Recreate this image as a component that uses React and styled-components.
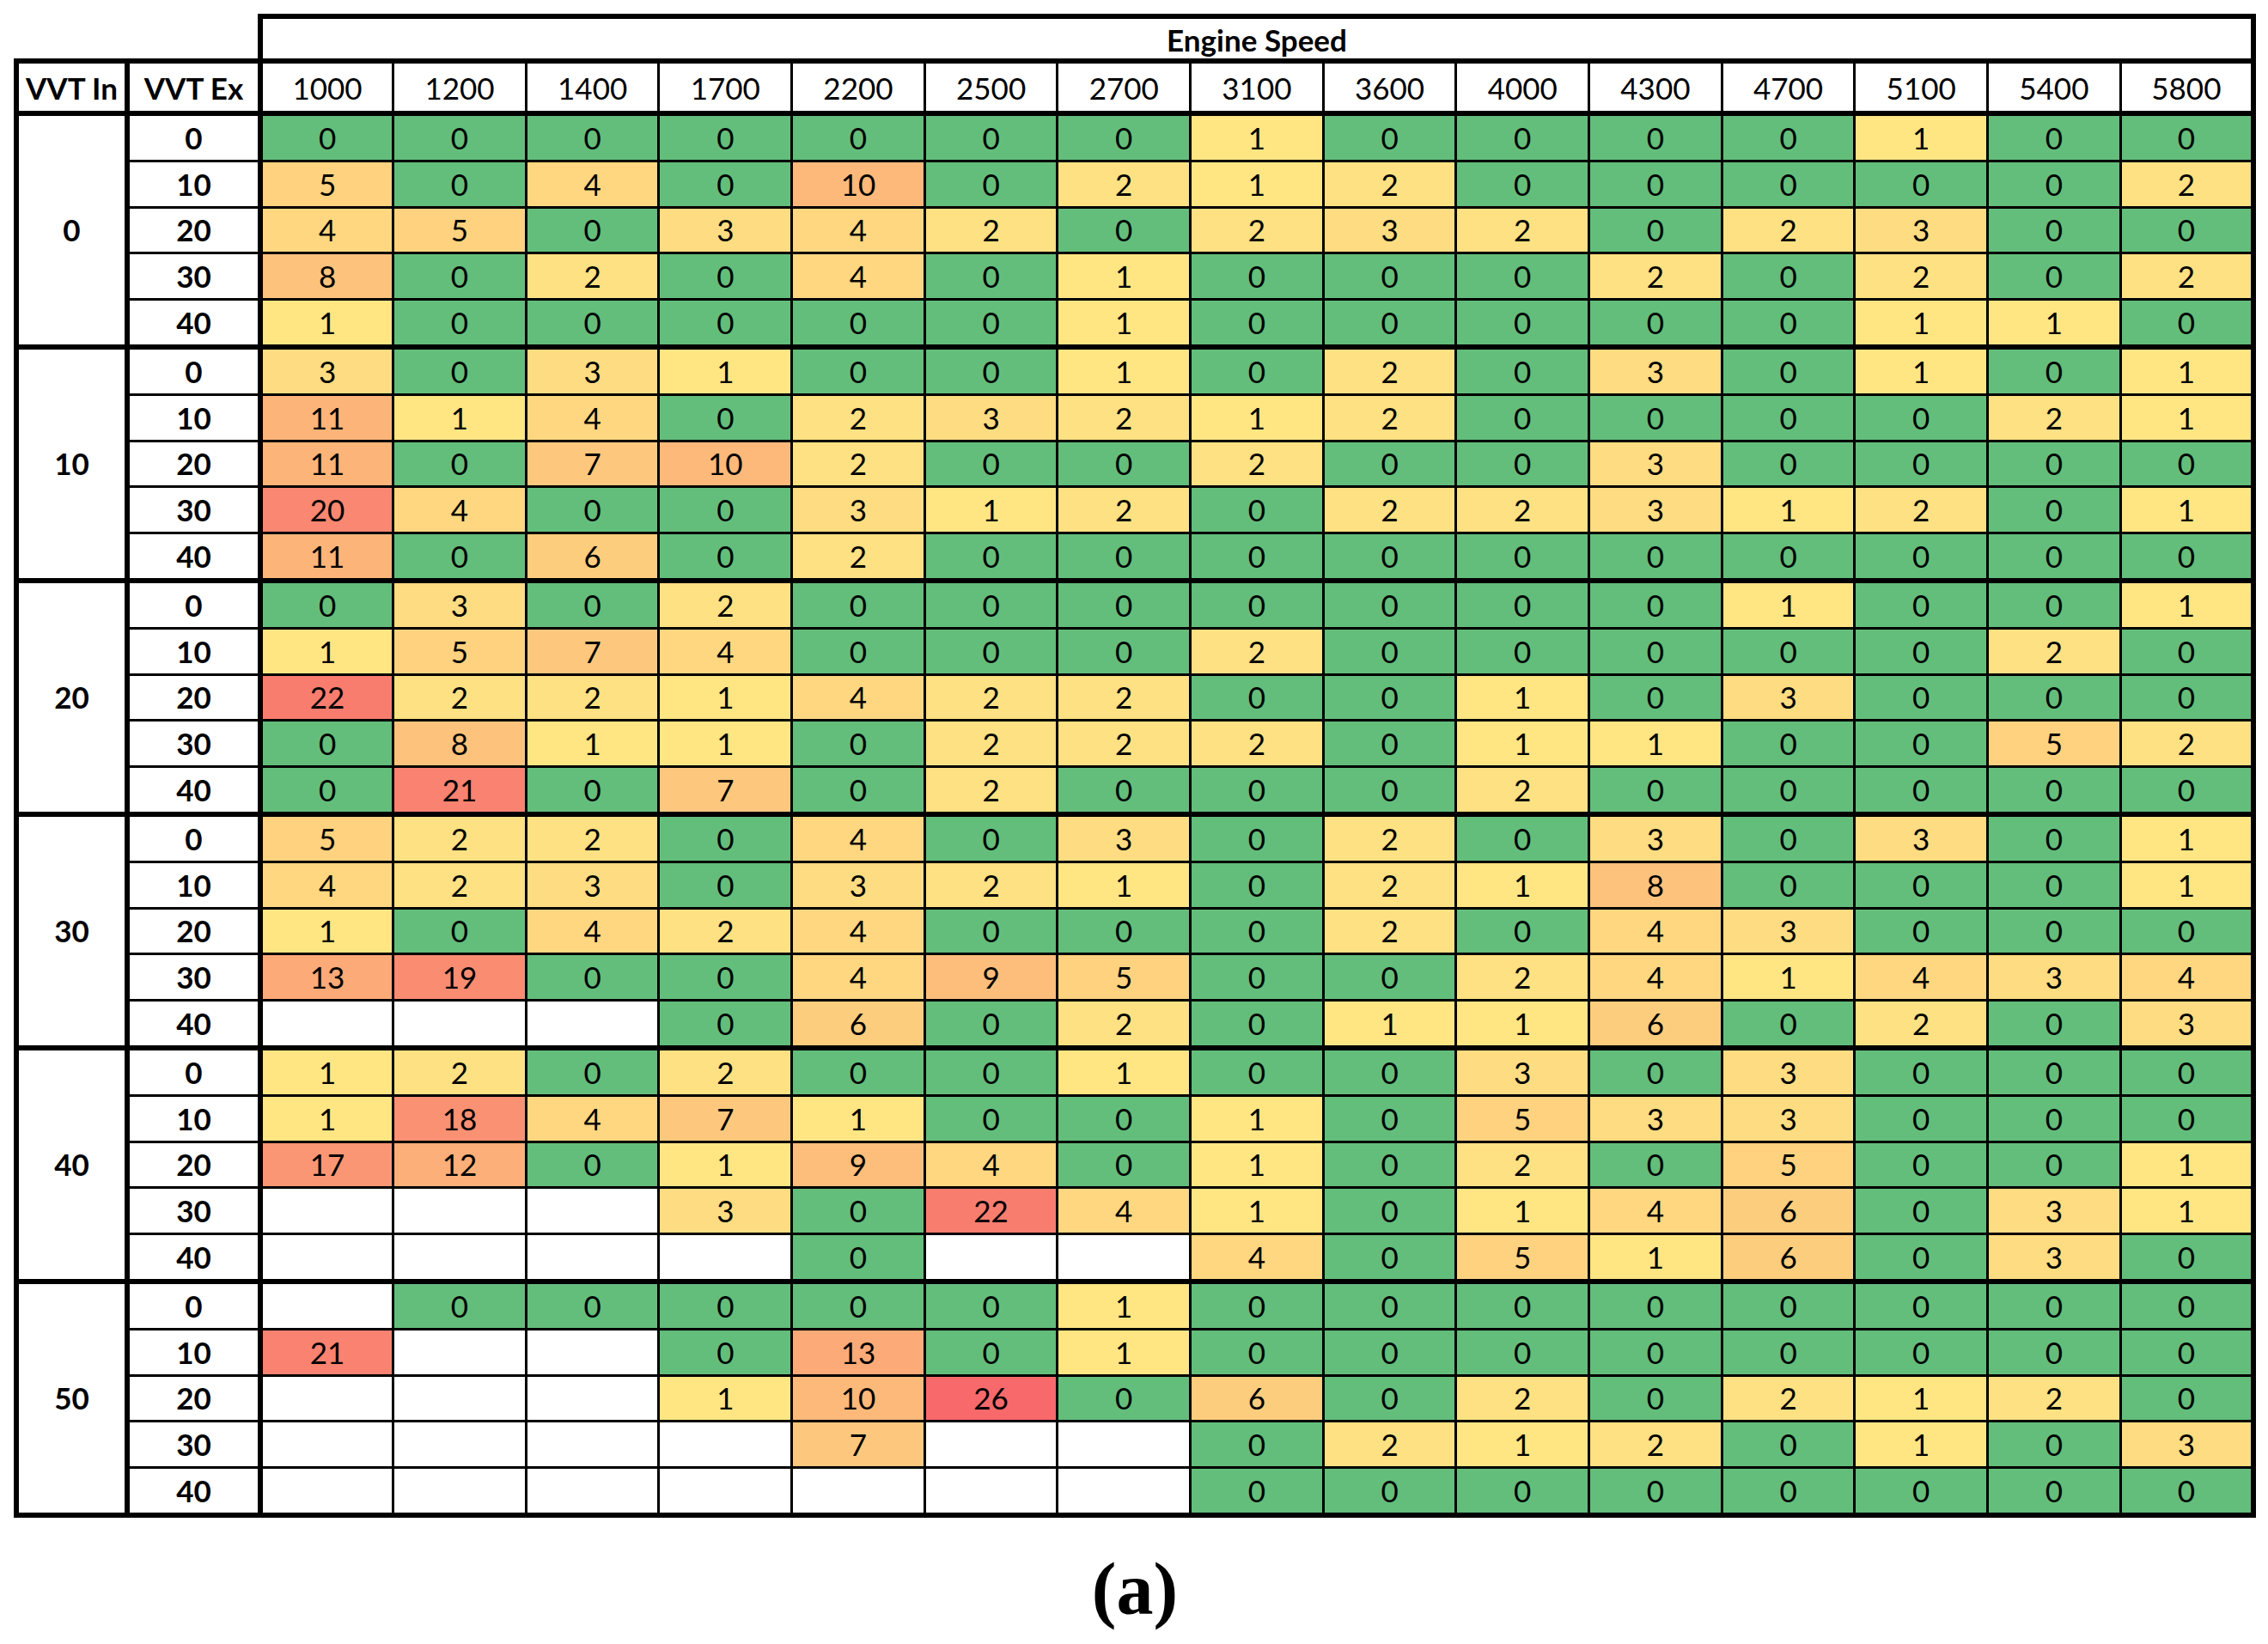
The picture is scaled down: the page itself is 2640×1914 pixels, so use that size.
import React from 'react';
import styled, { createGlobalStyle } from 'styled-components';

const GlobalStyle = createGlobalStyle`
  html, body {
    margin: 0;
    padding: 0;
    background: #ffffff;
  }
  body {
    width: 2640px;
    height: 1914px;
    overflow: hidden;
    font-family: Lato, "Open Sans", sans-serif;
  }
`;

const SPEEDS = [1000, 1200, 1400, 1700, 2200, 2500, 2700, 3100, 3600, 4000, 4300, 4700, 5100, 5400, 5800];
const EX_VALUES = [0, 10, 20, 30, 40];

// "-" marks an empty cell
const RAW = {
  0: [
    '0 0 0 0 0 0 0 1 0 0 0 0 1 0 0',
    '5 0 4 0 10 0 2 1 2 0 0 0 0 0 2',
    '4 5 0 3 4 2 0 2 3 2 0 2 3 0 0',
    '8 0 2 0 4 0 1 0 0 0 2 0 2 0 2',
    '1 0 0 0 0 0 1 0 0 0 0 0 1 1 0',
  ],
  10: [
    '3 0 3 1 0 0 1 0 2 0 3 0 1 0 1',
    '11 1 4 0 2 3 2 1 2 0 0 0 0 2 1',
    '11 0 7 10 2 0 0 2 0 0 3 0 0 0 0',
    '20 4 0 0 3 1 2 0 2 2 3 1 2 0 1',
    '11 0 6 0 2 0 0 0 0 0 0 0 0 0 0',
  ],
  20: [
    '0 3 0 2 0 0 0 0 0 0 0 1 0 0 1',
    '1 5 7 4 0 0 0 2 0 0 0 0 0 2 0',
    '22 2 2 1 4 2 2 0 0 1 0 3 0 0 0',
    '0 8 1 1 0 2 2 2 0 1 1 0 0 5 2',
    '0 21 0 7 0 2 0 0 0 2 0 0 0 0 0',
  ],
  30: [
    '5 2 2 0 4 0 3 0 2 0 3 0 3 0 1',
    '4 2 3 0 3 2 1 0 2 1 8 0 0 0 1',
    '1 0 4 2 4 0 0 0 2 0 4 3 0 0 0',
    '13 19 0 0 4 9 5 0 0 2 4 1 4 3 4',
    '- - - 0 6 0 2 0 1 1 6 0 2 0 3',
  ],
  40: [
    '1 2 0 2 0 0 1 0 0 3 0 3 0 0 0',
    '1 18 4 7 1 0 0 1 0 5 3 3 0 0 0',
    '17 12 0 1 9 4 0 1 0 2 0 5 0 0 1',
    '- - - 3 0 22 4 1 0 1 4 6 0 3 1',
    '- - - - 0 - - 4 0 5 1 6 0 3 0',
  ],
  50: [
    '- 0 0 0 0 0 1 0 0 0 0 0 0 0 0',
    '21 - - 0 13 0 1 0 0 0 0 0 0 0 0',
    '- - - 1 10 26 0 6 0 2 0 2 1 2 0',
    '- - - - 7 - - 0 2 1 2 0 1 0 3',
    '- - - - - - - 0 0 0 0 0 0 0 0',
  ],
};

const GROUPS = [0, 10, 20, 30, 40, 50].map((vin) => ({
  vin,
  rows: RAW[vin].map((line) => line.split(' ').map((s) => (s === '-' ? null : Number(s)))),
}));

const GREEN = '#63BE7B';
const YELLOW = [255, 235, 132];
const RED = [248, 105, 107];
const MAX = 26;

const cellColor = (v) => {
  if (v === null) return '#ffffff';
  if (v === 0) return GREEN;
  const t = Math.min(v / MAX, 1);
  const c = YELLOW.map((a, i) => Math.round(a + (RED[i] - a) * t));
  return `rgb(${c.join(',')})`;
};

const THICK = 6;
const THIN = 3;
const ROW_H = 50.8;

const Figure = styled.figure`
  margin: 0;
  padding: 16px 0 0 16px;
  display: inline-flex;
  flex-direction: column;
  align-items: center;
`;

const Table = styled.table`
  border-collapse: collapse;
  table-layout: fixed;
  width: 2604px;
  font-family: Lato, "Open Sans", sans-serif;
  font-size: 35px;
  color: #000;
`;

const Col = styled.col`
  width: ${(p) => p.$w}px;
`;

const BaseCell = styled.td`
  padding: 0;
  text-align: center;
  vertical-align: middle;
  line-height: 1;
  white-space: nowrap;
`;

const CornerCell = styled(BaseCell)`
  border: none;
  height: 44px;
`;

const TitleCell = styled(BaseCell)`
  border: ${THICK}px solid #000;
  font-weight: 700;
  height: 44px;
  padding-top: 2px;
`;

const AxisHeadCell = styled(BaseCell)`
  border: ${THICK}px solid #000;
  font-weight: 700;
  height: 53px;
  padding-top: 2px;
`;

const SpeedHeadCell = styled(BaseCell)`
  border-top: ${THICK}px solid #000;
  border-bottom: ${THICK}px solid #000;
  border-left: ${THIN}px solid #000;
  border-right: ${(p) => (p.$last ? THICK : THIN)}px solid #000;
  height: 53px;
  padding-top: 2px;
`;

const GroupCell = styled(BaseCell)`
  border: ${THICK}px solid #000;
  font-weight: 700;
  background: #fff;
`;

const ExCell = styled(BaseCell)`
  border-left: ${THICK}px solid #000;
  border-right: ${THICK}px solid #000;
  border-top: ${(p) => (p.$first ? THICK : THIN)}px solid #000;
  border-bottom: ${(p) => (p.$last ? THICK : THIN)}px solid #000;
  font-weight: 700;
  height: ${ROW_H}px;
`;

const ValueCell = styled(BaseCell)`
  border-left: ${THIN}px solid #000;
  border-right: ${(p) => (p.$lastCol ? THICK : THIN)}px solid #000;
  border-top: ${(p) => (p.$firstRow ? THICK : THIN)}px solid #000;
  border-bottom: ${(p) => (p.$lastRow ? THICK : THIN)}px solid #000;
  height: ${ROW_H}px;
`;

const Caption = styled.figcaption`
  margin-top: 40px;
  font-family: "Liberation Serif", "DejaVu Serif", serif;
  font-weight: 700;
  font-size: 86px;
  line-height: 1;
  color: #000;
`;

export default function App() {
  return (
    <>
      <GlobalStyle />
      <Figure>
        <Table>
          <colgroup>
            <Col $w={129} />
            <Col $w={155} />
            {SPEEDS.map((s) => (
              <Col key={s} $w={154.67} />
            ))}
          </colgroup>
          <thead>
            <tr>
              <CornerCell colSpan={2} />
              <TitleCell colSpan={SPEEDS.length}>Engine Speed</TitleCell>
            </tr>
            <tr>
              <AxisHeadCell>VVT In</AxisHeadCell>
              <AxisHeadCell>VVT Ex</AxisHeadCell>
              {SPEEDS.map((s, i) => (
                <SpeedHeadCell key={s} $last={i === SPEEDS.length - 1}>
                  {s}
                </SpeedHeadCell>
              ))}
            </tr>
          </thead>
          <tbody>
            {GROUPS.map((g) =>
              g.rows.map((row, r) => (
                <tr key={`${g.vin}-${r}`}>
                  {r === 0 && <GroupCell rowSpan={5}>{g.vin}</GroupCell>}
                  <ExCell $first={r === 0} $last={r === 4}>
                    {EX_VALUES[r]}
                  </ExCell>
                  {row.map((v, c) => (
                    <ValueCell
                      key={c}
                      $firstRow={r === 0}
                      $lastRow={r === 4}
                      $lastCol={c === row.length - 1}
                      style={{ background: cellColor(v) }}
                    >
                      {v === null ? '' : v}
                    </ValueCell>
                  ))}
                </tr>
              ))
            )}
          </tbody>
        </Table>
        <Caption>(a)</Caption>
      </Figure>
    </>
  );
}
